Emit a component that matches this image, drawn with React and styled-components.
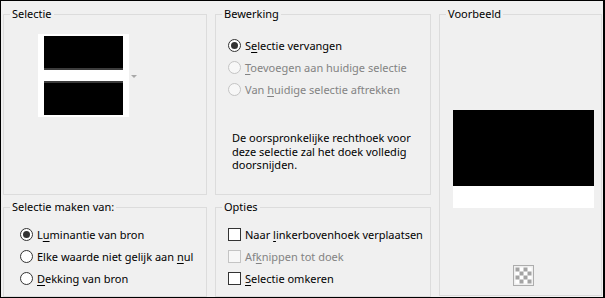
import styled, { createGlobalStyle } from 'styled-components';

const GlobalStyle = createGlobalStyle`
  html, body {
    margin: 0;
    padding: 0;
    background: #f0f0f0;
  }
  body {
    font-family: "Noto Sans", "Liberation Sans", sans-serif;
    font-size: 11px;
    color: #000;
  }
`;

const Dialog = styled.div`
  box-sizing: border-box;
  width: 605px;
  height: 298px;
  border-style: solid;
  border-color: #000;
  border-width: 1px 2px 1px 1px;
  padding: 6px 0 0 2px;
  background: #f0f0f0;
  display: grid;
  grid-template-columns: 204px 216px 163px;
  grid-template-rows: 188px 97px;
  column-gap: 8px;
  row-gap: 5px;
`;

const Group = styled.fieldset`
  margin: 0;
  padding: 0;
  min-width: 0;
  border: 1px solid #dcdcdc;
  grid-row: ${(p) => p.$row || 'auto'};
  grid-column: ${(p) => p.$col || 'auto'};
  margin-bottom: ${(p) => (p.$tall ? '1px' : '0')};
`;

const Legend = styled.legend`
  margin-left: 6px;
  padding: 0 2px;
  line-height: 14px;
  font-size: 11px;
`;

const Body = styled.div`
  padding: ${(p) => p.$pad};
  display: flex;
  flex-direction: column;
  align-items: ${(p) => (p.$center ? 'center' : 'flex-start')};
`;

const ThumbRow = styled.div`
  display: flex;
  align-items: center;
  gap: 2px;
`;

const Thumb = styled.div`
  width: 91px;
  height: 83px;
  box-sizing: border-box;
  background: #fff;
  padding: 2px 6px;
  display: flex;
  flex-direction: column;
  justify-content: space-between;
`;

const ThumbBar = styled.div`
  height: 34px;
  background: #000;
  border-${(p) => p.$edge}: 2px solid #3c3c3c;
  box-sizing: border-box;
`;

const DropArrow = styled.span`
  width: 0;
  height: 0;
  border-left: 3px solid transparent;
  border-right: 3px solid transparent;
  border-top: 3px solid #a8a8a8;
  margin-top: 1px;
`;

const Option = styled.div`
  height: 22px;
  display: flex;
  align-items: center;
  gap: 3px;
  color: ${(p) => (p.$disabled ? '#838383' : '#000')};
  white-space: nowrap;
`;

const Radio = styled.span`
  box-sizing: border-box;
  width: 13px;
  height: 13px;
  border-radius: 50%;
  border: 1px solid ${(p) => (p.$disabled ? '#c4c4c4' : '#333')};
  background: ${(p) => (p.$disabled ? '#f7f7f7' : '#fff')};
  display: flex;
  align-items: center;
  justify-content: center;
  flex: none;
  margin-right: 1px;
  &::after {
    content: '';
    display: ${(p) => (p.$checked ? 'block' : 'none')};
    width: 7px;
    height: 7px;
    border-radius: 50%;
    background: #333;
  }
`;

const Check = styled.span`
  box-sizing: border-box;
  width: 13px;
  height: 13px;
  border: 1px solid ${(p) => (p.$disabled ? '#c4c4c4' : '#333')};
  background: ${(p) => (p.$disabled ? '#f7f7f7' : '#fff')};
  flex: none;
  margin-right: 1px;
`;

const Key = styled.u`
  text-underline-offset: 2px;
`;

const Note = styled.p`
  margin: 31px 0 0 4px;
  line-height: 13.5px;
  width: 190px;
`;

const Preview = styled.div`
  width: 141px;
  height: 98px;
  background: #fff;
  display: flex;
  flex-direction: column;
`;

const PreviewInk = styled.div`
  height: 76px;
  background: #000;
`;

const AlphaButton = styled.span`
  display: block;
  margin-top: 57px;
  width: 21px;
  height: 21px;
`;

function CheckerIcon() {
  const cells = [];
  for (let r = 0; r < 4; r++) {
    for (let c = 0; c < 4; c++) {
      if ((r + c) % 2 === 0) {
        cells.push(<rect key={`${r}-${c}`} x={2.5 + c * 4} y={2.5 + r * 4} width="4" height="4" fill="#a4a4a4" />);
      }
    }
  }
  return (
    <svg width="21" height="21" viewBox="0 0 21 21">
      <rect x="0.5" y="0.5" width="20" height="20" fill="#f0f0f0" stroke="#adadad" />
      <rect x="2.5" y="2.5" width="16" height="16" fill="#fff" />
      {cells}
    </svg>
  );
}

export default function App() {
  return (
    <>
      <GlobalStyle />
      <Dialog>
        <Group $row="1" $col="1">
          <Legend>Selectie</Legend>
          <Body $pad="13px 0 0 34px">
            <ThumbRow>
              <Thumb>
                <ThumbBar $edge="bottom" />
                <ThumbBar $edge="top" />
              </Thumb>
              <DropArrow />
            </ThumbRow>
          </Body>
        </Group>

        <Group $row="1" $col="2">
          <Legend>Bewerking</Legend>
          <Body $pad="13px 0 0 12px">
            <Option>
              <Radio $checked />
              <span>S<Key>e</Key>lectie vervangen</span>
            </Option>
            <Option $disabled>
              <Radio $disabled />
              <span><Key>T</Key>oevoegen aan huidige selectie</span>
            </Option>
            <Option $disabled>
              <Radio $disabled />
              <span>Van <Key>h</Key>uidige selectie aftrekken</span>
            </Option>
            <Note>
              De oorspronkelijke rechthoek voor deze selectie zal het doek volledig doorsnijden.
            </Note>
          </Body>
        </Group>

        <Group $row="1 / 3" $col="3" $tall>
          <Legend>Voorbeeld</Legend>
          <Body $pad="89px 7px 0 12px" $center>
            <Preview>
              <PreviewInk />
            </Preview>
            <AlphaButton>
              <CheckerIcon />
            </AlphaButton>
          </Body>
        </Group>

        <Group $row="2" $col="1">
          <Legend>Selectie maken van:</Legend>
          <Body $pad="9px 0 0 16px">
            <Option>
              <Radio $checked />
              <span>L<Key>u</Key>minantie van bron</span>
            </Option>
            <Option>
              <Radio />
              <span>Elke waarde niet gelijk aan <Key>n</Key>ul</span>
            </Option>
            <Option>
              <Radio />
              <span><Key>D</Key>ekking van bron</span>
            </Option>
          </Body>
        </Group>

        <Group $row="2" $col="2">
          <Legend>Opties</Legend>
          <Body $pad="9px 0 0 12px">
            <Option>
              <Check />
              <span>Naar <Key>l</Key>inkerbovenhoek verplaatsen</span>
            </Option>
            <Option $disabled>
              <Check $disabled />
              <span>Af<Key>k</Key>nippen tot doek</span>
            </Option>
            <Option>
              <Check />
              <span><Key>S</Key>electie omkeren</span>
            </Option>
          </Body>
        </Group>
      </Dialog>
    </>
  );
}
